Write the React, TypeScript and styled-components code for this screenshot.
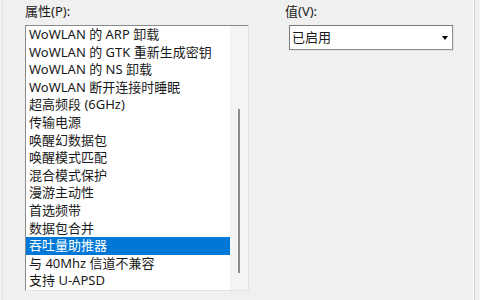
import React from 'react';
import styled, {createGlobalStyle} from 'styled-components';

const GlobalStyle = createGlobalStyle`
  body {
    margin: 0;
    background: #f0f0f0;
  }
`;

const font = `"Noto Sans", "Noto Sans CJK SC", sans-serif`;

const Page = styled.div`
  width: 480px;
  height: 300px;
  overflow: hidden;
  background: #f0f0f0;
  font-family: ${font};
  font-size: 13px;
  color: #1a1a1a;
`;

const Panel = styled.div`
  box-sizing: border-box;
  width: 473px;
  height: 300px;
  margin-left: 2px;
  border-left: 1px solid #e2e2e2;
  border-right: 1px solid #cfcfcf;
  box-shadow: inset -5px 0 0 -4px #ffffff;
  display: flex;
  padding: 3px 0 0 22px;
`;

const Column = styled.div<{ $width: number; $gap?: number }>`
  display: flex;
  flex-direction: column;
  width: ${p => p.$width}px;
  margin-left: ${p => p.$gap ?? 0}px;
`;

const Label = styled.div`
  height: 17px;
  line-height: 17px;
  margin-bottom: 5px;
  white-space: nowrap;
`;

const ListBox = styled.div`
  box-sizing: border-box;
  height: 266px;
  display: flex;
  background: #ffffff;
  border-top: 1px solid #8a8a8a;
  border-left: 1px solid #8a8a8a;
  border-right: 1px solid #e3e3e3;
  border-bottom: 1px solid #e3e3e3;
`;

const Items = styled.div`
  flex: 1;
  display: flex;
  flex-direction: column;
`;

const Item = styled.div<{ $selected?: boolean }>`
  height: 17.6px;
  line-height: 17.6px;
  padding-left: 3px;
  white-space: nowrap;
  background: ${p => (p.$selected ? '#0078d7' : 'transparent')};
  color: ${p => (p.$selected ? '#ffffff' : '#1a1a1a')};
`;

const ScrollTrack = styled.div`
  width: 18px;
  background: #f4f4f4;
  display: flex;
  justify-content: center;
  padding-top: 83px;
`;

const Thumb = styled.div`
  width: 2px;
  height: 164px;
  background: #8b8b8b;
`;

const Combo = styled.div`
  box-sizing: border-box;
  margin-left: 4px;
  width: 164px;
  height: 25px;
  display: flex;
  align-items: center;
  background: #ffffff;
  border: 1px solid #7a7a7a;
  border-right-color: #8f8f8f;
  border-bottom-color: #8f8f8f;
  box-shadow: 1px 1px 0 #e3e3e3;
`;

const ComboText = styled.div`
  flex: 1;
  padding-left: 2px;
  line-height: 17px;
`;

const ComboButton = styled.div`
  width: 15px;
  height: 21px;
  display: flex;
  align-items: center;
  justify-content: center;
  background: #ffffff;
`;

const Arrow = styled.div`
  width: 0;
  height: 0;
  border-left: 3.5px solid transparent;
  border-right: 3.5px solid transparent;
  border-top: 4px solid #000000;
`;

const properties = [
    'WoWLAN 的 ARP 卸载',
    'WoWLAN 的 GTK 重新生成密钥',
    'WoWLAN 的 NS 卸载',
    'WoWLAN 断开连接时睡眠',
    '超高频段 (6GHz)',
    '传输电源',
    '唤醒幻数据包',
    '唤醒模式匹配',
    '混合模式保护',
    '漫游主动性',
    '首选频带',
    '数据包合并',
    '吞吐量助推器',
    '与 40Mhz 信道不兼容',
    '支持 U-APSD',
];

const App = () => {
    const selected = '吞吐量助推器';
    return (
        <Page>
            <GlobalStyle/>
            <Panel>
                <Column $width={224}>
                    <Label>属性(P):</Label>
                    <ListBox>
                        <Items>
                            {properties.map(name => (
                                <Item key={name} $selected={name === selected}>{name}</Item>
                            ))}
                        </Items>
                        <ScrollTrack>
                            <Thumb/>
                        </ScrollTrack>
                    </ListBox>
                </Column>
                <Column $width={170} $gap={36}>
                    <Label>值(V):</Label>
                    <Combo>
                        <ComboText>已启用</ComboText>
                        <ComboButton>
                            <Arrow/>
                        </ComboButton>
                    </Combo>
                </Column>
            </Panel>
        </Page>
    );
};

export default App;
